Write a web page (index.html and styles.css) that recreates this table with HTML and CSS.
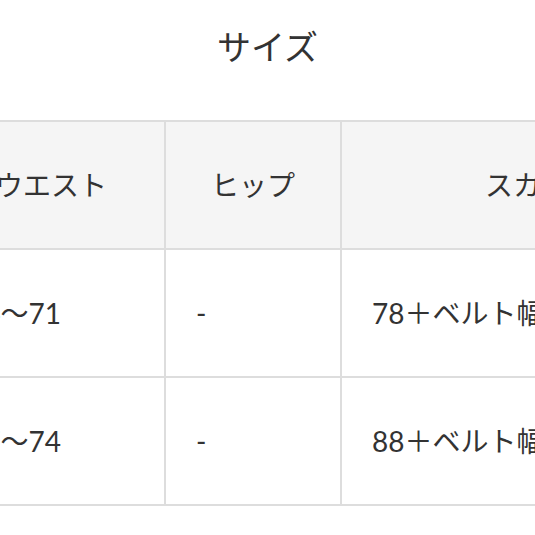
FILE: index.html
```html
<!DOCTYPE html>
<html lang="ja">
<head>
<meta charset="utf-8">
<title>サイズ</title>
<link rel="stylesheet" href="styles.css">
</head>
<body>
<div class="page">
  <h2 class="title">サイズ</h2>
  <div class="table-wrap">
    <table class="size-table">
      <thead>
        <tr>
          <th class="col-waist">ウエスト</th>
          <th class="col-hip">ヒップ</th>
          <th class="col-skirt">スカート丈</th>
        </tr>
      </thead>
      <tbody>
        <tr>
          <td>64〜71</td>
          <td>-</td>
          <td>78＋ベルト幅4</td>
        </tr>
        <tr>
          <td>67〜74</td>
          <td>-</td>
          <td>88＋ベルト幅4</td>
        </tr>
      </tbody>
    </table>
  </div>
</div>
</body>
</html>
```

FILE: styles.css
```css
html, body {
  margin: 0;
  padding: 0;
  overflow: hidden;
  background: #ffffff;
}

.page {
  width: 535px;
  font-family: Lato, "Noto Sans CJK JP", sans-serif;
  color: #333333;
}

.title {
  margin: 22px 0 0;
  font-size: 34px;
  line-height: 50px;
  font-weight: normal;
  text-align: center;
}

.table-wrap {
  margin-top: 48px;
  margin-left: -64px;
}

.size-table {
  border-collapse: separate;
  border-spacing: 0;
  border-top: 2px solid #dddddd;
  border-left: 2px solid #dddddd;
  table-layout: fixed;
  width: 832px;
  font-size: 28px;
}

.size-table th,
.size-table td {
  box-sizing: border-box;
  height: 128px;
  padding: 0 30px;
  border-right: 2px solid #dddddd;
  border-bottom: 2px solid #dddddd;
  vertical-align: middle;
  white-space: nowrap;
  line-height: 40px;
}

.size-table th {
  background: #f5f5f5;
  font-weight: normal;
  text-align: center;
}

.size-table td {
  text-align: left;
}

.col-waist { width: 228px; }
.col-hip { width: 176px; }
.col-skirt { width: 428px; }
```
